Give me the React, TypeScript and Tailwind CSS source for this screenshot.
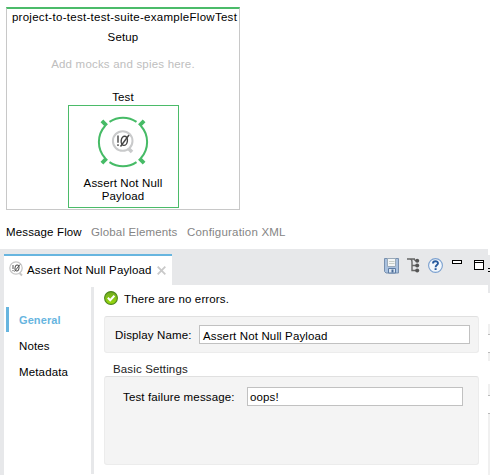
import React from "react";

function Ring() {
  return (
    <svg width="54" height="54" viewBox="96 115 54 54" fill="none">
      <g stroke="#46bb66" strokeWidth="2">
        <path d="M109.5 121.8A24 24 0 0 1 136.5 121.8" />
        <path d="M109.5 162.2A24 24 0 0 0 136.5 162.2" />
        <path d="M105 126A24 24 0 0 0 105 158" />
        <path d="M141 126A24 24 0 0 1 141 158" />
      </g>
      <g stroke="#46bb66" strokeWidth="3.8">
        <path d="M101.9 120.9L106.6 125.6M144.1 120.9L139.4 125.6M101.9 163.1L106.6 158.4M144.1 163.1L139.4 158.4" />
      </g>
      <circle cx="122.7" cy="141" r="9.8" stroke="#c9cacb" strokeWidth="2" />
      <path d="M128.5 148.5L132 152" stroke="#c9cacb" strokeWidth="3.5" />
      <g stroke="#454545" strokeWidth="1.4">
        <path d="M118 135.5V142.8M118 144.3V146" />
        <ellipse cx="124.3" cy="140.8" rx="3.1" ry="4.6" transform="rotate(8 124.3 140.8)" />
        <path d="M120.5 146.5L129 135" />
      </g>
    </svg>
  );
}

function TabIcon() {
  return (
    <svg width="15" height="16" viewBox="0 0 15 16" fill="none">
      <circle cx="7" cy="7" r="6.2" stroke="#c6c6c6" strokeWidth="1.3" />
      <path d="M10.5 12L13 14.5" stroke="#c6c6c6" strokeWidth="2" />
      <path d="M4 4V8M4 9V10.2M5.5 10.5L11 3.5" stroke="#555" />
      <ellipse cx="8" cy="7" rx="2" ry="3" stroke="#555" transform="rotate(10 8 7)" />
    </svg>
  );
}

function Save() {
  return (
    <svg width="16" height="16" viewBox="0 0 16 16">
      <path d="M.5 .5H14.5V15H2L.5 13.5Z" fill="#a9c1df" stroke="#7890ae" />
      <path d="M3.5 .5H11.5V8.5H3.5Z" fill="#f4f6f6" stroke="#9aa9b8" />
      <path d="M5 3.5H10.5M5 5.5H10.5" stroke="#c9cfc8" />
      <path d="M4.5 10.5H11.5V15H4.5Z" fill="#dce6f2" stroke="#5c7ba3" />
      <path d="M7.5 11.5H9.5V14.5H7.5Z" fill="#4b6c99" />
    </svg>
  );
}

function Tree() {
  return (
    <svg width="13" height="15" viewBox="0 0 13 15" fill="none">
      <path d="M0 1H8M3 1C4.8 1 5 2 5 4V12.5H9M5 7.5H9M7 1.5L9 3" stroke="#666" strokeWidth="1.4" />
      <g fill="#555">
        <circle cx="10.2" cy="2.8" r="2" />
        <circle cx="10.2" cy="7.6" r="2" />
        <circle cx="10.2" cy="12.5" r="2" />
      </g>
    </svg>
  );
}

function Help() {
  return (
    <svg width="15" height="15" viewBox="0 0 15 15">
      <circle cx="7.5" cy="7.5" r="6.9" fill="#f2f7fc" stroke="#7ba0cf" strokeWidth="1.1" />
      <path d="M5 5.6C5 2.6 10 2.6 10 5.3C10 7 7.6 7.2 7.6 9.2" fill="none" stroke="#265a9e" strokeWidth="1.9" />
      <path d="M6.6 10.2H8.6V12H6.6Z" fill="#265a9e" />
    </svg>
  );
}

function Check() {
  return (
    <svg width="14" height="14" viewBox="0 0 14 14">
      <defs>
        <linearGradient id="ok" x1="0" y1="0" x2="0" y2="1">
          <stop offset="0" stopColor="#6fa823" />
          <stop offset="1" stopColor="#9bdc0b" />
        </linearGradient>
      </defs>
      <circle cx="7" cy="7" r="6.4" fill="url(#ok)" stroke="#4c861b" strokeWidth="1.1" />
      <path d="M3.8 6.8L6.2 9.2L10.4 4.8" fill="none" stroke="#fff" strokeWidth="2" />
    </svg>
  );
}

export default function App() {
  return (
    <div className="flex h-[475px] w-[490px] flex-col overflow-hidden bg-white font-['Liberation_Sans',Arial,sans-serif] text-[11.5px] leading-[13px] tracking-[0.14px] whitespace-nowrap text-black">
      <section className="mt-[7px] ml-[6px] flex h-[203px] w-[234px] flex-col items-center border border-t-2 border-[#c8c8c8] border-t-[#4bbb69]">
        <h1 className="mt-[2px] ml-[3px] tracking-[0.28px]">project-to-test-test-suite-exampleFlowTest</h1>
        <h2 className="mt-[7px]">Setup</h2>
        <p className="mt-[14px] tracking-[0.2px] text-[#bebebe]">Add mocks and spies here.</p>
        <h2 className="mt-[20px]">Test</h2>
        <div className="mt-[1px] flex h-[103px] w-[111px] flex-col items-center border border-[#4bbb69] pt-[9px]">
          <Ring />
          <p className="mt-[8px] text-center">Assert Not Null<br />Payload</p>
        </div>
      </section>
      <nav className="mt-[16px] ml-[6px] flex h-[23px] text-[#858585]">
        <span className="w-[85px] text-black">Message Flow</span>
        <span className="w-[96px]">Global Elements</span>
        <span className="tracking-[0.2px]">Configuration XML</span>
      </nav>
      <div className="flex flex-1">
        <div className="w-[4px] bg-[#e7e8ea]" />
        <div className="flex w-[484px] flex-col">
          <header className="flex h-[36px] bg-[#e7e8ea] pt-[5px]">
            <div className="flex w-[168px] border-t-2 border-[#67b5df] bg-white pt-[5px] pl-[5px]">
              <TabIcon />
              <span className="mt-[3px] ml-[3px] w-[130px]">Assert Not Null Payload</span>
              <svg className="mt-[5px]" width="9" height="9" viewBox="0 0 9 9"><path d="M.7 .7L8.3 8.3M8.3 .7L.7 8.3" stroke="#c9c9c9" strokeWidth="1.8" /></svg>
            </div>
            <div className="ml-[212px] flex pt-[4px]">
              <Save />
              <div className="ml-[7px]"><Tree /></div>
              <div className="ml-[8px]"><Help /></div>
              <div className="mt-[2px] ml-[9px] h-[4px] w-[10px] border border-black bg-white" />
              <div className="mt-[2px] ml-[12px] h-[10px] w-[10px] border border-black bg-white pt-[1px]">
                <div className="h-px bg-black" />
              </div>
            </div>
          </header>
          <main className="flex flex-1">
            <aside className="flex w-[87px] flex-col pt-[22px]">
              <div className="ml-[2px] flex h-[25px] items-center border-l-[3px] border-[#67b5df] pt-[2px] pl-[10px] text-[11px] font-bold tracking-[0.1px] text-[#67b5df]">General</div>
              <span className="mt-[8px] ml-[15px]">Notes</span>
              <span className="mt-[13px] ml-[15px]">Metadata</span>
            </aside>
            <div className="mt-[2px] mb-[1px] w-[3px] bg-[#e7e8ea]" />
            <div className="ml-[10px] flex w-[375px] flex-col">
              <div className="mt-[6px] flex h-[25px] gap-[6px]"><Check /><span className="mt-[2px]">There are no errors.</span></div>
              <div className="flex h-[37px] items-center rounded-[3px] border border-[#ececec] border-t-[#e0e0e0] bg-[#f4f4f4] pl-[10px]">
                <span className="w-[84px] pt-px">Display Name:</span>
                <div className="h-[19px] w-[271px] border border-[#c1c1c1] bg-white pt-[4px] pl-[3px]">Assert Not Null Payload</div>
              </div>
              <h3 className="mt-[10px] ml-[9px] h-[13px] text-[#222]">Basic Settings</h3>
              <div className="flex h-[89px] rounded-[3px] border border-[#ececec] border-t-[#e0e0e0] bg-[#f4f4f4] pt-[10px] pl-[18px]">
                <span className="mt-[4px] w-[124px]">Test failure message:</span>
                <div className="h-[19px] w-[216px] border border-[#c1c1c1] bg-white pt-[3px] pl-[2px]">oops!</div>
              </div>
            </div>
          </main>
        </div>
        <div className="flex w-[2px] flex-col">
          <div className="mt-[6px] h-[13px] bg-[#e7e8ea]" />
          <div className="h-[4px] border-y border-black bg-[#e7e8ea]" />
          <div className="h-[21px] bg-[#e7e8ea]" />
          <div className="mt-[31px] h-[11px] border-b border-[#bbb] bg-[#f0f0f0]" />
          <div className="mt-[17px] h-[9px] border-t border-[#bbb] bg-[#f0f0f0]" />
          <div className="mt-[23px] h-[12px] border-b border-[#bbb] bg-[#f0f0f0]" />
          <div className="mt-[17px] flex-1 border-t border-[#bbb] bg-[#f0f0f0]" />
        </div>
      </div>
    </div>
  );
}
